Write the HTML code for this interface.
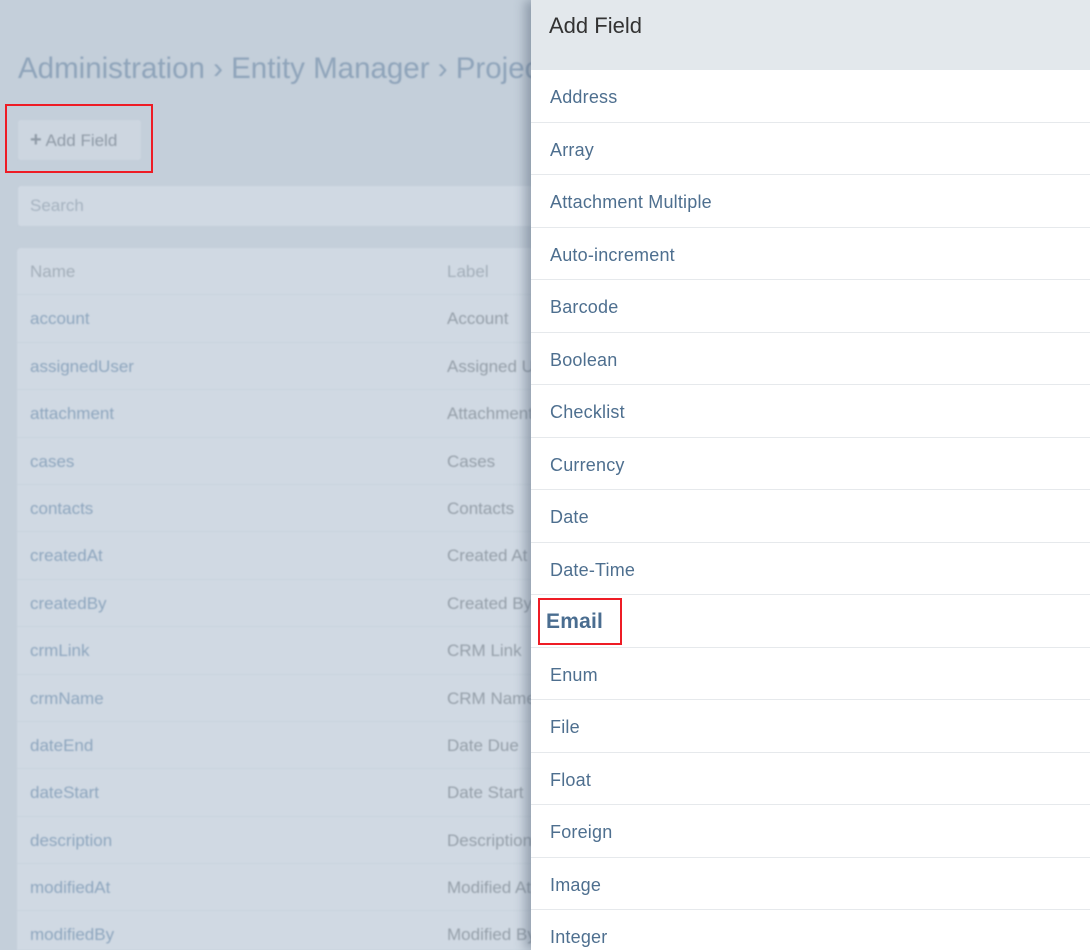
<!DOCTYPE html>
<html style="overflow:hidden;height:950px"><head><meta charset="utf-8"><style>
*{box-sizing:border-box;margin:0;padding:0}
body{width:1090px;height:950px;overflow:hidden;background:#c4cfda;font-family:"Liberation Sans",sans-serif;position:relative}
.left{position:absolute;left:0;top:0;width:560px;height:950px;overflow:hidden;filter:blur(0.8px)}
.title{position:absolute;left:18px;top:52px;font-size:29.5px;color:#8fa4ba;white-space:nowrap}
.btn{position:absolute;left:18px;top:120px;width:123px;height:40px;background:#cdd6e0;border-radius:3px;color:#8f9aa6;font-size:17px;line-height:40px;padding-left:12px}
.search{position:absolute;left:18px;top:186px;width:560px;height:40px;background:#d0d9e3;border-radius:3px;color:#a5b2bf;font-size:17px;line-height:40px;padding-left:12px}
.tbl{position:absolute;left:17px;top:248px;width:560px;height:720px;background:#d0d9e3;border-radius:4px}
.row{height:47.4px;border-bottom:1px solid #c8d2dc;position:relative;font-size:17px;line-height:47px}
.row .n{position:absolute;left:13px;color:#8ea6be}
.row .l{position:absolute;left:430px;color:#959fa9;white-space:nowrap}
.row.h .n,.row.h .l{color:#a3aeb9}
.red{position:absolute;border:2px solid #ee1c25}
.panel{position:absolute;left:531px;top:0;width:559px;height:950px;overflow:hidden;background:#fff;box-shadow:-6px 0 10px rgba(80,95,115,.45)}
.ph{height:70px;background:#e3e8ec;font-size:22px;color:#333;padding:13px 0 0 18px}
.it{height:52.5px;border-bottom:1px solid #e6e9ec;font-size:18px;color:#4e6f8f;padding-left:19px;line-height:54px;letter-spacing:.2px}
</style></head><body>
<div class="left">
<div class="title">Administration › Entity Manager › Projects</div>
<div class="btn"><b style="font-size:20px">+</b> Add Field</div>
<div class="search">Search</div>
<div class="tbl">
<div class="row h"><span class="n">Name</span><span class="l">Label</span></div>
<div class="row"><span class="n">account</span><span class="l">Account</span></div>
<div class="row"><span class="n">assignedUser</span><span class="l">Assigned User</span></div>
<div class="row"><span class="n">attachment</span><span class="l">Attachment</span></div>
<div class="row"><span class="n">cases</span><span class="l">Cases</span></div>
<div class="row"><span class="n">contacts</span><span class="l">Contacts</span></div>
<div class="row"><span class="n">createdAt</span><span class="l">Created At</span></div>
<div class="row"><span class="n">createdBy</span><span class="l">Created By</span></div>
<div class="row"><span class="n">crmLink</span><span class="l">CRM Link</span></div>
<div class="row"><span class="n">crmName</span><span class="l">CRM Name</span></div>
<div class="row"><span class="n">dateEnd</span><span class="l">Date Due</span></div>
<div class="row"><span class="n">dateStart</span><span class="l">Date Start</span></div>
<div class="row"><span class="n">description</span><span class="l">Description</span></div>
<div class="row"><span class="n">modifiedAt</span><span class="l">Modified At</span></div>
<div class="row"><span class="n">modifiedBy</span><span class="l">Modified By</span></div>
</div>
</div>
<div class="red" style="left:5px;top:104px;width:148px;height:69px"></div>
<div class="panel">
<div class="ph">Add Field</div>
<div class="it">Address</div>
<div class="it">Array</div>
<div class="it">Attachment Multiple</div>
<div class="it">Auto-increment</div>
<div class="it">Barcode</div>
<div class="it">Boolean</div>
<div class="it">Checklist</div>
<div class="it">Currency</div>
<div class="it">Date</div>
<div class="it">Date-Time</div>
<div class="it" style="font-size:21px;font-weight:bold;padding-left:15px;color:#4a6d90">Email</div>
<div class="it">Enum</div>
<div class="it">File</div>
<div class="it">Float</div>
<div class="it">Foreign</div>
<div class="it">Image</div>
<div class="it">Integer</div>
</div>
<div class="red" style="left:538px;top:598px;width:84px;height:47px"></div>
</body></html>
